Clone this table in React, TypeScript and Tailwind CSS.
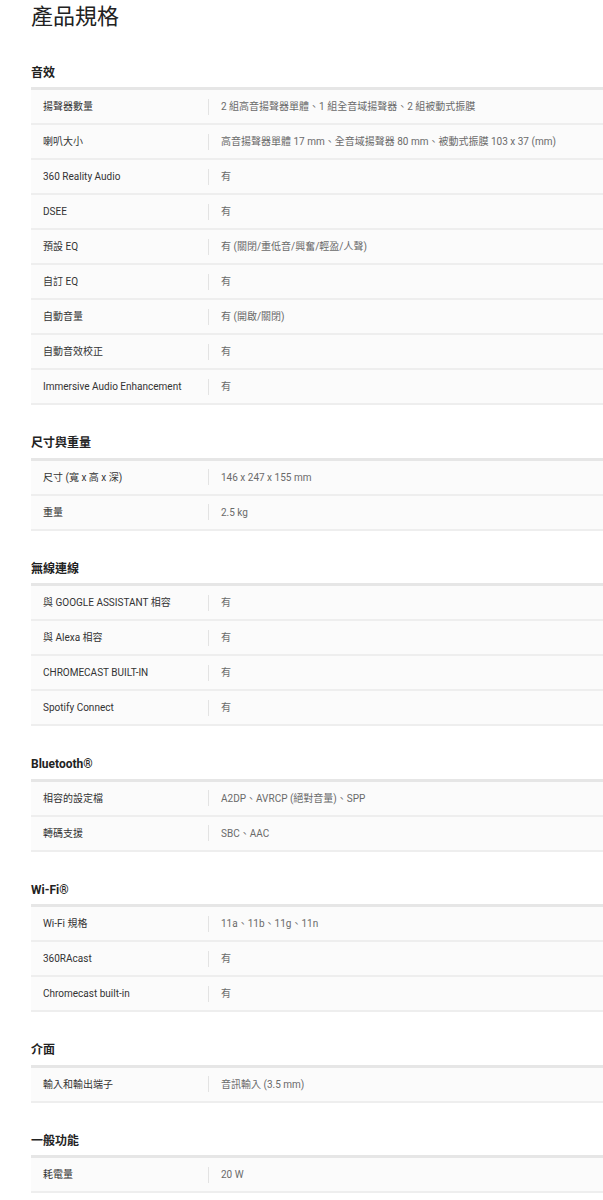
const FONT = { fontFamily: 'Roboto, "Noto Sans CJK TC", "Noto Sans", sans-serif' };

type Section = { title: string; rows: [string, string][] };

const SECTIONS: Section[] = [
  {
    title: '音效',
    rows: [
      ['揚聲器數量', '2 組高音揚聲器單體、1 組全音域揚聲器、2 組被動式振膜'],
      ['喇叭大小', '高音揚聲器單體 17 mm、全音域揚聲器 80 mm、被動式振膜 103 x 37 (mm)'],
      ['360 Reality Audio', '有'],
      ['DSEE', '有'],
      ['預設 EQ', '有 (關閉/重低音/興奮/輕盈/人聲)'],
      ['自訂 EQ', '有'],
      ['自動音量', '有 (開啟/關閉)'],
      ['自動音效校正', '有'],
      ['Immersive Audio Enhancement', '有'],
    ],
  },
  {
    title: '尺寸與重量',
    rows: [
      ['尺寸 (寬 x 高 x 深)', '146 x 247 x 155 mm'],
      ['重量', '2.5 kg'],
    ],
  },
  {
    title: '無線連線',
    rows: [
      ['與 GOOGLE ASSISTANT 相容', '有'],
      ['與 Alexa 相容', '有'],
      ['CHROMECAST BUILT-IN', '有'],
      ['Spotify Connect', '有'],
    ],
  },
  {
    title: 'Bluetooth®',
    rows: [
      ['相容的設定檔', 'A2DP、AVRCP (絕對音量)、SPP'],
      ['轉碼支援', 'SBC、AAC'],
    ],
  },
  {
    title: 'Wi-Fi®',
    rows: [
      ['Wi-Fi 規格', '11a、11b、11g、11n'],
      ['360RAcast', '有'],
      ['Chromecast built-in', '有'],
    ],
  },
  {
    title: '介面',
    rows: [['輸入和輸出端子', '音訊輸入 (3.5 mm)']],
  },
  {
    title: '一般功能',
    rows: [['耗電量', '20 W']],
  },
];

function SpecSection({ section }: { section: Section }) {
  return (
    <div>
      <h3 className="h-[29px] flex items-center text-[12px] font-bold text-[#222]">{section.title}</h3>
      <div className="border-t-[3px] border-[#e6e6e6]">
        {section.rows.map(([label, value]) => (
          <div
            key={label}
            className="h-[35px] flex items-center bg-[#fbfbfb] border-b-2 border-[#eeeeee] text-[10px]"
          >
            <div className="w-[177px] shrink-0 pl-[12px] text-[#333] whitespace-nowrap">{label}</div>
            <div className="h-[16px] w-px bg-[#e3e3e3] shrink-0" />
            <div className="pl-[12px] text-[#6a6a6a] whitespace-nowrap">{value}</div>
          </div>
        ))}
      </div>
    </div>
  );
}

export default function App() {
  return (
    <div className="w-[603px] min-h-[1200px] bg-white pl-[31px] overflow-hidden" style={FONT}>
      <h1 className="h-[34px] leading-[34px] text-[22px] font-normal text-[#222]">產品規格</h1>
      <div className="mt-[24px] flex flex-col gap-[23.5px]">
        {SECTIONS.map((s) => (
          <SpecSection key={s.title} section={s} />
        ))}
      </div>
    </div>
  );
}
